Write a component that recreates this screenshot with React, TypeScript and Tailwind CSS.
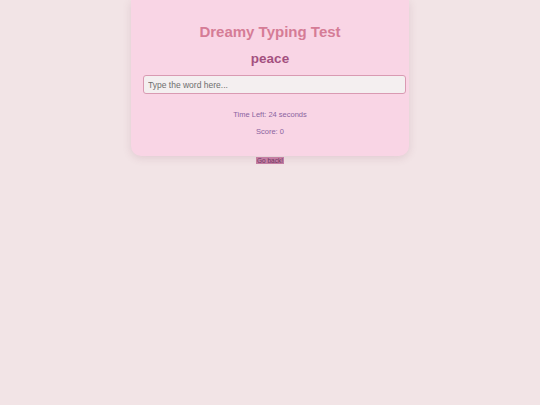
import React from 'react';

export default function App() {
  return (
    <div className="min-h-screen bg-[#f2e4e6] flex flex-col items-center font-['Liberation_Sans',Arial,sans-serif]">
      {/* Card */}
      <div className="w-[278px] bg-[#f9d5e5] rounded-b-[10px] shadow-[0_2px_8px_rgba(120,60,90,0.15)] flex flex-col items-center pt-[23px] pb-[19px]">
        <h1 className="text-[15px] leading-[18px] font-bold text-[#d57c96]">Dreamy Typing Test</h1>
        <div className="mt-[10px] text-[13.5px] leading-[16px] font-bold text-[#a4507f]">peace</div>
        <input
          type="text"
          autoFocus
          placeholder="Type the word here..."
          className="mt-[8px] w-[263px] h-[19px] ml-[9px] px-[4px] text-[8.5px] bg-[#f4eff0] border-[1.5px] border-[#d99ab2] rounded-[3px] outline-none text-[#555] placeholder:text-[#6e6e6e]"
        />
        <div className="mt-[16px] text-[7.5px] leading-[10px] text-[#8a64a0]">Time Left: 24 seconds</div>
        <div className="mt-[7px] text-[7.5px] leading-[10px] text-[#8a64a0]">Score: 0</div>
      </div>
      <button className="mt-[1px] px-[1px] h-[7px] leading-[7px] text-[6.5px] bg-[#c47ea3] text-[#6e3560]">
        Go back!
      </button>
    </div>
  );
}
